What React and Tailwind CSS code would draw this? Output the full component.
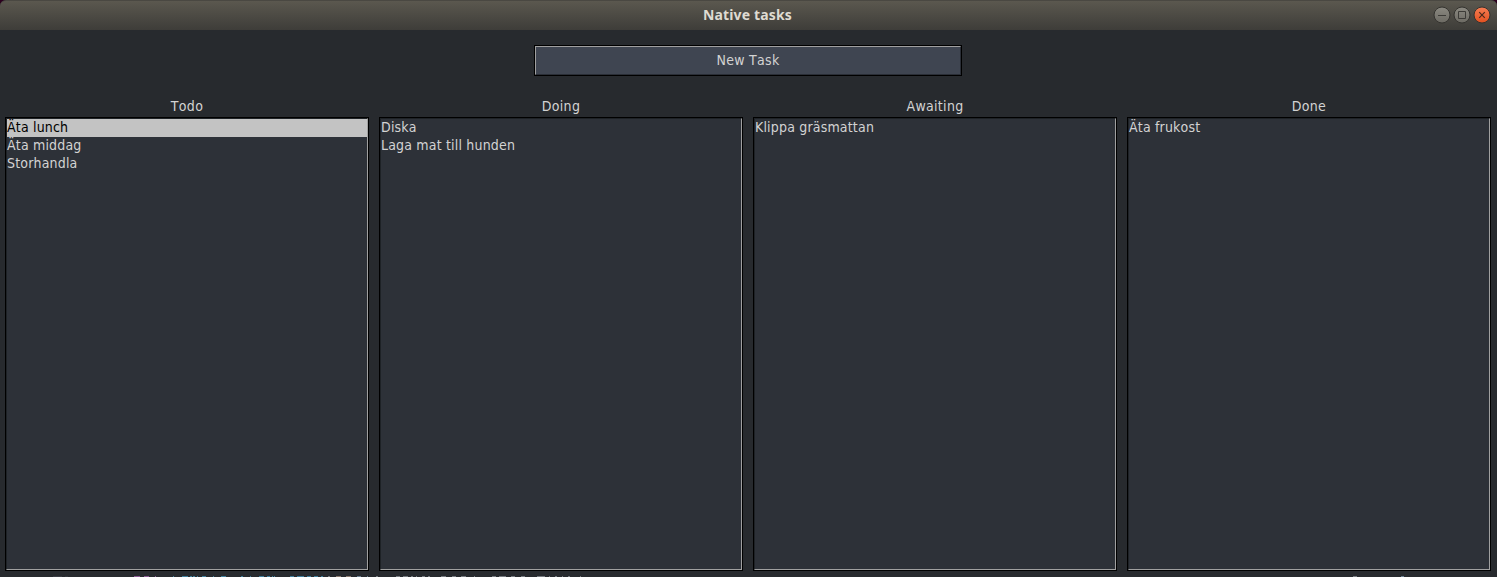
const columns = [
  { title: 'Todo', tasks: ['Äta lunch', 'Äta middag', 'Storhandla'], selected: 0 },
  { title: 'Doing', tasks: ['Diska', 'Laga mat till hunden'] },
  { title: 'Awaiting', tasks: ['Klippa gräsmattan'] },
  { title: 'Done', tasks: ['Äta frukost'] },
];

// Tops of the editor text that shows under the window: [x, width, colour]
const marks = [
  [53, 9, '#3a3d44'], [65, 3, '#33363c'], [134, 6, '#8a5a92'], [144, 5, '#8a5a92'], [155, 1, '#8a5a92'],
  [173, 1, '#3f7f9c'], [182, 6, '#3f7f9c'], [190, 2, '#3f7f9c'], [193, 2, '#3f7f9c'], [197, 1, '#3f7f9c'], [202, 4, '#3f7f9c'],
  [213, 1, '#3f7f9c'], [221, 5, '#3f7f9c'], [241, 2, '#3f7f9c'], [250, 1, '#3f7f9c'], [259, 5, '#3f7f9c'],
  [267, 3, '#3f7f9c'], [272, 1, '#3f7f9c'], [274, 1, '#3f7f9c'],
  [290, 4, '#3f7f9c'], [297, 7, '#3f7f9c'], [307, 4, '#3f7f9c'], [314, 4, '#3f7f9c'], [321, 2, '#3f7f9c'], [328, 2, '#777b80'],
  [336, 5, '#8a7a70'], [346, 5, '#8a7a70'], [357, 4, '#6b7f90'], [367, 1, '#6b7f90'], [376, 2, '#777b80'],
  [396, 4, '#777b80'], [403, 5, '#777b80'], [411, 2, '#777b80'], [416, 1, '#777b80'], [422, 3, '#777b80'], [428, 2, '#777b80'],
  [441, 5, '#777b80'], [452, 4, '#777b80'], [461, 5, '#777b80'], [474, 1, '#777b80'],
  [492, 4, '#777b80'], [499, 7, '#777b80'], [511, 4, '#777b80'], [521, 4, '#777b80'],
  [537, 8, '#777b80'], [549, 1, '#777b80'], [555, 2, '#777b80'], [562, 1, '#777b80'], [568, 2, '#777b80'], [580, 1, '#777b80'],
  [1353, 4, '#777b80'], [1401, 3, '#6b7f90'],
];

function TitleBar() {
  return (
    <header className="relative flex h-[30px] shrink-0 items-center justify-center rounded-t-[6px] border-t border-[#4a4842] bg-linear-to-b from-[#5b584f] to-[#3e3d39] pr-[2px] pb-[2px]">
      <h1 className="font-['Noto_Sans','Open_Sans',sans-serif] text-[14px] leading-none font-bold tracking-[0.15px] text-[#dfdbd2]">Native tasks</h1>
      <svg className="absolute top-[4px] right-[4px]" width="62" height="20" viewBox="0 0 62 20" fill="none">
        <defs>
          <linearGradient id="grey" x1="0" y1="0" x2="0" y2="1">
            <stop stopColor="#8b8981" />
            <stop offset="1" stopColor="#6c6a63" />
          </linearGradient>
          <linearGradient id="orange" x1="0" y1="0" x2="0" y2="1">
            <stop stopColor="#f67e54" />
            <stop offset="1" stopColor="#e2501f" />
          </linearGradient>
        </defs>
        <circle cx="11" cy="10" r="8" fill="url(#grey)" stroke="#34332f" />
        <circle cx="31" cy="10" r="8" fill="url(#grey)" stroke="#34332f" />
        <circle cx="51" cy="10" r="8" fill="url(#orange)" stroke="#34332f" />
        <path d="M7 10.5H15M27.5 6.5H34.5V13.5H27.5Z" stroke="#3c3b37" />
        <path d="M48.2 7.2L53.8 12.8M53.8 7.2L48.2 12.8" stroke="#4b2a1c" strokeWidth="1.2" />
      </svg>
    </header>
  );
}

function Column({ title, tasks, selected }) {
  return (
    <section className="w-[364px]">
      <h2 className="h-[20px] text-center leading-[18px] tracking-[0.3px]">{title}</h2>
      <div className="h-[454px] border border-black">
        <ul className="h-full border border-t-[#1e2226] border-r-[#a0a0a0] border-b-[#a0a0a0] border-l-[#1e2226] bg-[#2d3138]">
          {tasks.map((task, i) => (
            <li key={task} className={i === selected ? 'h-[18px] bg-[#c3c3c3] leading-[17px] text-black' : 'h-[18px] leading-[17px]'}>
              {task}
            </li>
          ))}
        </ul>
      </div>
    </section>
  );
}

export default function App() {
  return (
    <div className="h-[577px] w-full overflow-hidden bg-[#2c001e]">
      <div className="flex h-full flex-col rounded-t-[6px] bg-[#272a2e] font-['DejaVu_Sans_Condensed','DejaVu_Sans',sans-serif] text-[14px] tracking-[0.18px] text-[#d3d3d3] [font-kerning:none]">
        <TitleBar />
        <div className="flex justify-center pt-[15px] pr-[1px]">
          <button className="h-[31px] w-[428px] border border-black">
            <span className="flex h-full items-center justify-center border border-t-[#a0a0a0] border-r-[#2a2e36] border-b-[#2a2e36] border-l-[#a0a0a0] bg-[#3f4551] pb-px tracking-[0.3px]">
              New Task
            </span>
          </button>
        </div>
        <main className="flex gap-[10px] pt-[21px] pl-[5px]">
          {columns.map((column) => (
            <Column key={column.title} {...column} />
          ))}
        </main>
        <svg className="mt-auto block shrink-0" width="1497" height="1" shapeRendering="crispEdges">
          {marks.map(([x, w, fill]) => (
            <rect key={x} x={x} y="0" width={w} height="1" fill={fill} />
          ))}
        </svg>
      </div>
    </div>
  );
}
